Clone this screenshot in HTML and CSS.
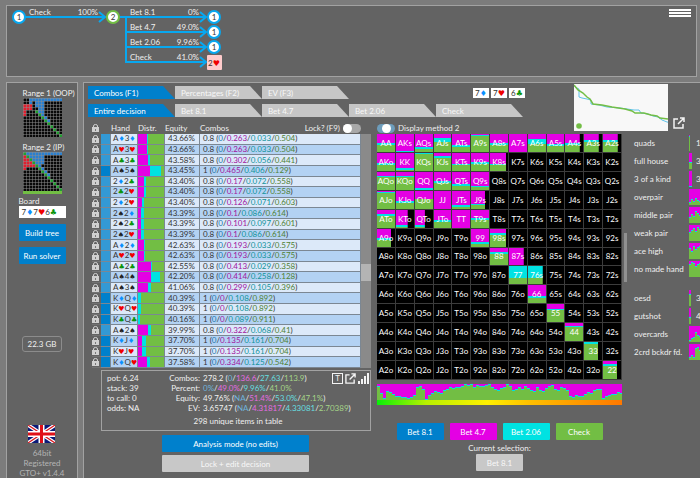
FILE: index.html
```html
<!DOCTYPE html>
<html lang="en">
<head>
<meta charset="utf-8">
<title>GTO+</title>
<link rel="stylesheet" href="styles.css">
</head>
<body>
<header class="panel tree">
  <svg class="tree-map" width="230" height="70" viewBox="0 0 230 70" role="img" aria-label="Decision tree">
    <g class="tree-lines">
      <path d="M12 11H97M113 11H199M119 11V56H199M119 26H199M119 41H199"/>
      <path d="M92 6l6 5-6 5M193 6l6 5-6 5M193 21l6 5-6 5M193 36l6 5-6 5M193 51l6 5-6 5"/>
    </g>
    <circle class="node" cx="12" cy="11" r="6"/>
    <circle class="node node-active" cx="106" cy="11" r="6"/>
    <circle class="node" cx="207" cy="11" r="6"/>
    <circle class="node" cx="207" cy="26" r="6"/>
    <circle class="node" cx="207" cy="41" r="6"/>
    <rect class="node-card" x="200" y="49" width="15" height="15" rx="1"/>
    <g class="node-text">
      <text x="12" y="14">1</text><text x="106" y="14">2</text>
      <text x="207" y="14">1</text><text x="207" y="29">1</text><text x="207" y="44">1</text>
      <text x="207" y="60">2<tspan class="suit h">♥</tspan></text>
    </g>
    <g class="edge-text">
      <text x="22" y="9">Check</text><text x="123" y="9">Bet 8.1</text><text x="123" y="24">Bet 4.7</text><text x="123" y="39">Bet 2.06</text><text x="123" y="54">Check</text>
    </g>
    <g class="edge-text edge-value">
      <text x="91" y="9">100%</text><text x="192" y="9">0%</text><text x="192" y="24">49.0%</text><text x="192" y="39">9.96%</text><text x="192" y="54">41.0%</text>
    </g>
  </svg>
  <button class="menu" aria-label="Menu"><i></i><i></i><i></i></button>
</header>

<div class="columns">
  <aside class="panel side">
    <div class="range"><span>Range 1 (OOP)</span><svg id="range1" width="39" height="39" viewBox="0 0 39 39"></svg></div>
    <div class="range range-current"><span>Range 2 (IP)</span><svg id="range2" width="39" height="39" viewBox="0 0 39 39"></svg></div>
    <div class="board">
      <span>Board</span>
      <div class="board-cards">7<b class="suit d">♦</b>7<b class="suit h">♥</b>6<b class="suit c">♣</b></div>
      <button class="btn">Build tree</button>
      <button class="btn">Run solver</button>
    </div>
    <div class="memory">22.3 GB</div>
    <footer class="about">
      <svg width="27" height="18" viewBox="0 0 27 18" role="img" aria-label="English">
        <path fill="#0b1a78" d="M0 0h27v18H0z"/>
        <path stroke="#fff" stroke-width="3.6" d="M0 0l27 18M27 0L0 18"/>
        <path stroke="#d8141c" stroke-width="1.2" d="M0 0l27 18M27 0L0 18"/>
        <path stroke="#fff" stroke-width="6" d="M13.500 0v18M0 9h27"/>
        <path stroke="#e01018" stroke-width="3" d="M13.500 0v18M0 9h27"/>
      </svg>
      <span>64bit</span><span>Registered</span><span>GTO+ v1.4.4</span>
    </footer>
  </aside>

  <main class="panel main">
    <div class="top">
      <div class="tabs-area">
        <div class="tab-line">
          <nav class="tabs"><button class="tab active">Combos (F1)</button><button class="tab">Percentages (F2)</button><button class="tab">EV (F3)</button></nav>
          <div class="cards"><span>7<b class="suit d">♦</b></span><span>7<b class="suit h">♥</b></span><span>6<b class="suit c">♣</b></span></div>
        </div>
        <nav class="tabs"><button class="tab active">Entire decision</button><button class="tab">Bet 8.1</button><button class="tab">Bet 4.7</button><button class="tab">Bet 2.06</button><button class="tab">Check</button></nav>
      </div>
      <svg class="equity-graph" width="94" height="47" viewBox="0 0 94 47" role="img" aria-label="Equity graph">
        <path fill="none" stroke="#5fc3ea" d="M0 2l3 2 2 1v8l3 1 5 1 4 1v4l8 1 8 2 13 1 14 2h5l2 3 7 1 5 2 5 1 4 3 5 2 4 1"/>
        <path fill="none" stroke="#73be46" stroke-width="1.500" d="M0 1l4 5 5 3 4 4 3 2 3 5 9 1 10 2 13 2 7 2 3 2h9l7 2 6 1 3 2 8 1"/>
        <circle cx="5" cy="42" r="2.800" fill="#73be46"/>
      </svg>
      <button class="icon-btn popout" aria-label="Open graph"><svg width="12" height="12" viewBox="0 0 12 12"><path d="M5 2H1v9h9V7M7 1h4v4M11 1L5 7"/></svg></button>
    </div>

    <div class="work">
      <section class="left">
        <div class="table-wrap">
          <table class="combos">
            <colgroup><col class="w-lock"><col class="w-strip"><col class="w-hand"><col class="w-dist"><col class="w-eq"><col></colgroup>
            <thead><tr>
              <th><svg class="lock" width="7" height="8" viewBox="0 0 7 8"><path d="M0 3h7v5H0z"/><path class="shackle" d="M1.500 3V2a2 1.500 0 0 1 4 0v1"/><path class="keyhole" d="M3 5h1v2H3z"/></svg></th><th></th><th>Hand</th><th>Distr.</th><th>Equity</th>
              <th><div class="combo-head"><span>Combos</span><label class="switch">Lock? (F9)<input type="checkbox" role="switch"></label></div></th>
            </tr></thead>
            <tbody id="rows"></tbody>
          </table>
          <div class="scroll"><i></i></div>
        </div>
        <div class="summary">
          <dl class="pot"><dd>pot: 6.24</dd><dd>stack: 39</dd><dd>to call: 0</dd><dd>odds: NA</dd></dl>
          <dl class="totals">
            <dt>Combos:</dt><dd>278.2 (<i class="b">0</i>/<i class="m">136.6</i>/<i class="t">27.63</i>/<i class="g">113.9</i>)</dd>
            <dt>Percent:</dt><dd><i class="b">0%</i>/<i class="m">49.0%</i>/<i class="t">9.96%</i>/<i class="g">41.0%</i></dd>
            <dt>Equity:</dt><dd>49.76% (<i class="b">NA</i>/<i class="m">51.4%</i>/<i class="t">53.0%</i>/<i class="g">47.1%</i>)</dd>
            <dt>EV:</dt><dd>3.65747 (<i class="b">NA</i>/<i class="m">4.31817</i>/<i class="t">4.33081</i>/<i class="g">2.70389</i>)</dd>
          </dl>
          <div class="tools">
            <button class="icon-btn boxed" aria-label="Text">T</button>
            <button class="icon-btn" aria-label="Open table"><svg width="11" height="11" viewBox="0 0 12 12"><path d="M5 2H1v9h9V7M7 1h4v4M11 1L5 7"/></svg></button>
            <button class="icon-btn" aria-label="Chart"><svg width="11" height="11" viewBox="0 0 11 11"><path class="solid" d="M0 8h2v3H0zM3 6h2v5H3zM6 3h2v8H6zM9 0h2v11H9z"/></svg></button>
          </div>
          <p>298 unique items in table</p>
        </div>
        <div class="modes"><button class="btn">Analysis mode (no edits)</button><button class="btn off">Lock + edit decision</button></div>
      </section>

      <section class="right">
        <label class="switch display"><input type="checkbox" role="switch" checked>Display method 2</label>
        <div class="matrix-line">
          <div class="matrix" id="matrix"></div>
          <div class="mini-scroll"><i></i></div>
          <ul class="groups" id="groups"></ul>
        </div>
        <div class="under">
          <svg id="histogram" width="100%" height="16" viewBox="0 0 245 16" preserveAspectRatio="none"></svg>
          <div class="heat"></div>
          <div class="actions"><button class="btn">Bet 8.1</button><button class="btn mag">Bet 4.7</button><button class="btn cy">Bet 2.06</button><button class="btn gr">Check</button></div>
          <span>Current selection:</span>
          <button class="btn off">Bet 8.1</button>
        </div>
      </section>
    </div>
  </main>
</div>
<script src="app.js"></script>
</body>
</html>
```
FILE: styles.css
```css
:root {
  --blue: #0080cc;
  --magenta: #e400e4;
  --cyan: #00e2e2;
  --green: #72be44;
  --grey: #636363;
}
* { box-sizing: border-box; }
body {
  margin: 0;
  min-height: 100vh;
  padding: 5px 0 0 6px;
  display: flex;
  flex-direction: column;
  gap: 5px;
  overflow: hidden;
  background: #7c7c7c;
  color: #f0f0f0;
  font: 8px/10px Lato, "Liberation Sans", sans-serif;
}
button { font: inherit; color: inherit; border: 0; padding: 0; background: none; }
i { font-style: normal; }
dl, dd, p, ul { margin: 0; padding: 0; list-style: none; }
.panel { background: var(--grey); border: 1px solid #a2a2a2; }
.suit { font-family: "DejaVu Sans", sans-serif; font-weight: 400; line-height: 0; }
.d { color: #0a90ff; fill: #0a90ff; }
.h { color: #f00000; fill: #f00000; }
.c { color: #0a950a; fill: #0a950a; }
.s { color: #222; }

/* decision tree */
.tree { display: flex; justify-content: space-between; align-items: flex-start; margin-right: 3px; }
.tree-lines { fill: none; stroke: #08a8f0; stroke-width: 2; }
.node { fill: #fff; stroke: #08a8f0; stroke-width: 2; }
.node-active { stroke: #72be44; }
.node-card { fill: #ffcccc; }
.node-text { text-anchor: middle; fill: #333; }
.edge-text { fill: #f0f0f0; }
.edge-value { text-anchor: end; }
.menu { display: grid; gap: 1px; width: 22px; margin: 3px 5px; }
.menu i { height: 2px; background: #fff; }

.columns { flex: 1; display: flex; gap: 5px; }

/* left side */
.side { flex: 0 0 72px; border-bottom: 0; display: flex; flex-direction: column; align-items: center; padding: 5px 0 0; }
.range { width: 39px; white-space: nowrap; display: grid; margin-bottom: 5px; }
.range-current { border-bottom: 3px solid var(--green); margin-bottom: 2px; }
.board { width: 47px; display: grid; }
.board-cards { background: #fff; color: #333; height: 12px; line-height: 12px; padding-left: 3px; margin-bottom: 6px; }
.btn { background: var(--blue); color: #fff; height: 17px; border-radius: 1px; }
.board .btn { margin-bottom: 6px; }
.off { background: #c8c8c8; color: #f8f8f8; }
.memory { margin-top: 66px; border: 1px solid #8c8c8c; border-radius: 3px; padding: 2px 5px; white-space: nowrap; }
.about { margin-top: auto; display: grid; justify-items: center; color: #b4b4b4; }
.about svg { margin-bottom: 5px; }

/* main */
.main { flex: 1; min-width: 0; padding: 1px 0 0 4px; border-right: 0; border-bottom: 0; }
.top { display: flex; height: 38px; }
.tabs-area { flex: 0 0 486px; padding-top: 2px; display: grid; gap: 5px; align-content: start; }
.tab-line { display: flex; justify-content: space-between; align-items: center; }
.tabs { display: flex; }
.tab {
  width: 87px; height: 13px; padding-left: 6px; text-align: left;
  background: #c6c6c6; color: #f8f8f8;
  clip-path: polygon(0 0, calc(100% - 12px) 0, 100% 100%, 0 100%);
}
.tab.active { background: var(--blue); color: #fff; }
.cards { display: flex; gap: 2px; margin-right: 49px; color: #333; }
.cards span { background: #fff; width: 16px; text-align: center; }
.equity-graph { background: #f8f8f8; }
.icon-btn svg, .popout svg { display: block; fill: none; stroke: #f4f4f4; stroke-width: 1.5; }
.icon-btn .solid { fill: #f4f4f4; stroke: none; }
.popout { align-self: flex-end; margin: 0 0 -7px 5px; }

.work { display: flex; gap: 6px; }
.left { flex: 0 0 283px; padding-left: 4px; }
.table-wrap { display: flex; }
.combos { width: 269px; height: 246px; border-collapse: separate; border-spacing: 0; table-layout: fixed; color: #333; }
.w-lock { width: 9px; }
.w-strip { width: 10px; }
.w-hand, .w-dist { width: 27px; }
.w-eq { width: 35px; }
.combos th { height: 12px; padding: 0; font-weight: 400; text-align: left; color: #f0f0f0; }
.combos td { padding: 0 0 0 2px; line-height: 9px; border-bottom: 1px solid #7b8793; background: #dce9f9; white-space: nowrap; }
.combos tr:nth-child(even) td { background: #b3d2f3; }
.combos td + td { border-right: 1px solid #7b8793; }
.combos td:nth-child(n + 5) { padding-left: 3px; }
.combos tbody tr .lock-cell.lock-cell { background: none; padding: 0; border-color: #737373; }
.combos tbody tr .strip.strip { background: #3399d5; }
.combos tbody tr .strip.full { background: var(--blue); }
.combos .suit { font-size: 7px; }
.lock { display: block; fill: #d0d0d0; }
.shackle { fill: none; stroke: #d0d0d0; }
.keyhole { fill: #777; }
.combo-head { display: flex; justify-content: space-between; }
.combos .b { color: #1b78ae; }
.combos .m { color: #a1149f; }
.combos .t { color: #11929a; }
.combos .g { color: #4f8133; }
.scroll { width: 10px; margin-top: 12px; background: #8a8a8a; padding-top: 130px; }
.scroll i { display: block; height: 17px; background: #b4b4b4; }

.switch { display: flex; align-items: center; gap: 3px; }
.switch input { appearance: none; margin: 0; width: 18px; height: 9px; border-radius: 5px; background: #a8a8a8; display: flex; align-items: center; }
.switch input::before { content: ""; width: 9px; height: 9px; border-radius: 50%; background: #fff; }
.switch input:checked { background: #6d9dbc; justify-content: center; }

.summary { margin: 2px 0 0 9px; border: 1px solid #a2a2a2; padding: 2px 1px 2px 5px; display: grid; grid-template-columns: 50px 1fr auto; height: 61px; }
.totals { display: grid; grid-template-columns: 43px 1fr; column-gap: 3px; white-space: nowrap; align-content: start; }
.totals dt { text-align: right; }
.totals dd { width: 0; }
.totals .b { color: #6fb3dc; }
.totals .m { color: #e46be2; }
.totals .t { color: #67dfe0; }
.totals .g { color: #a5d588; }
.tools { display: flex; gap: 2px; align-items: flex-start; }
.boxed { border: 1px solid #f4f4f4; width: 11px; height: 11px; line-height: 9px; }
.summary p { grid-column: 1 / -1; text-align: center; }
.modes { display: grid; gap: 3px; width: 147px; margin: 4px 0 0 70px; }

.right { flex: 1; min-width: 0; }
.display { height: 12px; }
.matrix-line { display: flex; width: 340px; }
.matrix { flex: 0 0 245px; height: 246px; display: grid; grid-template: repeat(13, 1fr) / repeat(13, 1fr); background: #000; }
.cell { display: grid; place-items: center; border: solid #3c3c3c; border-width: 0 1px 1px 0; color: #fff; background-repeat: no-repeat; min-width: 0; white-space: nowrap; }
.mini-scroll { width: 5px; padding: 99px 0 0 2px; }
.mini-scroll i { display: block; height: 49px; background: #909090; }
.groups { padding-left: 7px; }
.groups li { display: grid; grid-template-columns: 55px 4px 20px; height: 18px; align-items: center; white-space: nowrap; }
.groups li.wide { grid-template-columns: 55px 24px; }
.groups li.gap { margin-top: 11px; }
.groups svg { display: block; }
.groups span:last-child { padding-left: 3px; }
.under { width: 245px; margin-top: 4px; display: flex; flex-direction: column; align-items: center; }
.heat { width: 100%; height: 5px; background: linear-gradient(90deg, #08f008, #b8f000 20%, #fff000 45%, #ffc000 62%, #ff7800); }
.actions { display: flex; gap: 6px; margin: 18px 0 3px; }
.under .btn { width: 47px; }
.under .mag { background: var(--magenta); }
.under .cy { background: var(--cyan); }
.under .gr { background: var(--green); }
.under > span { line-height: 11px; }
```
FILE: app.js
```js
const M = '#e400e4', C = '#00e2e2', G = '#72be44';
const SUIT = { d: '♦', h: '♥', c: '♣', s: '♠' };
const LOCK = document.querySelector('.lock').outerHTML;

// hand, equity, combos, then the share of each action
const rows = `Ad3d 43.66 0.8 0 0.263 0.033 0.504
Ah3h 43.66 0.8 0 0.263 0.033 0.504
Ac3c 43.58 0.8 0 0.302 0.056 0.441
As5s 43.45 1 0 0.465 0.406 0.129
2d2c 43.40 0.8 0 0.17 0.072 0.558
2c2h 43.40 0.8 0 0.17 0.072 0.558
2d2h 43.40 0.8 0 0.126 0.071 0.603
2s2d 43.39 0.8 0 0.1 0.086 0.614
2s2c 43.39 0.8 0 0.101 0.097 0.601
2s2h 43.39 0.8 0 0.1 0.086 0.614
Ad2d 42.63 0.8 0 0.193 0.033 0.575
Ah2h 42.63 0.8 0 0.193 0.033 0.575
Ac2c 42.55 0.8 0 0.413 0.029 0.358
As4s 42.20 0.8 0 0.414 0.258 0.128
As3s 41.06 0.8 0 0.299 0.105 0.396
KdQd 40.39 1 0 0 0.108 0.892
KhQh 40.39 1 0 0 0.108 0.892
KcQc 40.16 1 0 0 0.089 0.911
As2s 39.99 0.8 0 0.322 0.068 0.41
KdJd 37.70 1 0 0.135 0.161 0.704
KhJh 37.70 1 0 0.135 0.161 0.704
KdQh 37.58 1 0 0.334 0.125 0.542`.split('\n').map(r => r.split(' '));

document.getElementById('rows').innerHTML = rows.map(([hand, eq, n, b, m, t, g]) => {
  const name = hand.replace(/[dhcs]/g, s => `<b class="suit ${s}">${SUIT[s]}</b>`);
  const x = m / n * 100, y = x + t / n * 100;
  return `<tr><td class="lock-cell">${LOCK}</td><td class="strip${n === '1' ? ' full' : ''}"></td><td>${name}</td>` +
    `<td class="distr" style="background-color:${G};background-image:linear-gradient(90deg,${M} ${x}%,${C} ${x}% ${y}%,${G} ${y}%)"></td>` +
    `<td>${eq}%</td><td>${n} (<i class="b">${b}</i>/<i class="m">${m}</i>/<i class="t">${t}</i>/<i class="g">${g}</i>)</td></tr>`;
}).join('');

// percent raised, percent small bet, percent of the hand in range
const fills = {
  AA: [50, 10], AKs: [96, 4], AQs: [70, 12], AJs: [22, 20], ATs: [60, 12], A9s: [8, 5], A8s: [50, 9], A7s: [100, 0], A6s: [30, 28], A5s: [55, 10],
  A4s: [52, 10, 82], A3s: [35, 12, 82], A2s: [35, 12, 82], AKo: [55, 10], KK: [82, 12], KQs: [2, 6], KJs: [14, 12], KTs: [60, 9], K9s: [52, 7], K8s: [60, 5, 90],
  AQo: [22, 8], KQo: [24, 5], QQ: [90, 8], QJs: [50, 10], QTs: [68, 8], Q9s: [76, 10], AJo: [5, 8], KJo: [56, 8], QJo: [42, 5], JJ: [100, 0], JTs: [75, 12],
  J9s: [70, 10, 80], ATo: [20, 14], KTo: [85, 10, 65], QTo: [82, 12, 55], JTo: [55, 10], TT: [100, 0], T9s: [45, 10], A9o: [50, 10, 80], 99: [72, 10],
  '98s': [20, 14, 90], 88: [25, 10], '87s': [100, 0, 82], 77: [0, 66], '76s': [0, 66, 82], 66: [60, 12], 55: [25, 10], 44: [15, 8], 33: [0, 10, 80], 22: [15, 10, 80]
};
const R = 'AKQJT98765432';
let cells = '';
for (let r = 0; r < 13; r++) for (let c = 0; c < 13; c++) {
  const h = r === c ? R[r] + R[c] : r < c ? R[r] + R[c] + 's' : R[c] + R[r] + 'o';
  const f = fills[h];
  const bg = f ? ` style="background-image:linear-gradient(${M} ${f[0]}%,${C} ${f[0]}% ${f[0] + f[1]}%,${G} ${f[0] + f[1]}%);background-size:${f[2] || 100}% 100%"` : '';
  cells += `<div class="cell"${bg}>${h}</div>`;
}
document.getElementById('matrix').innerHTML = cells;

function bars(list, step, h) {
  return `<path fill="${M}" d="M0 0h${list.length * step}v${h}H0z"/>` + list.map((v, i) =>
    `<path fill="${C}" d="M${i * step} ${h - v - 1}h${step}v${v + 1}h-${step}z"/><path fill="${G}" d="M${i * step} ${h - v}h${step}v${v}h-${step}z"/>`).join('');
}
const hist = [13, 6, 1, 8, 7, 5, 3, 3, 2, 2, 1, 2, 4, 12, 13, 10, 0, 4, 6, 8, 7, 6, 9, 10, 12, 11, 12, 12, 13, 15, 14, 15, 12, 14, 13, 13, 14, 15, 12, 10, 9, 11,
  12, 15, 13, 9, 10, 12, 10, 13, 11, 9, 8, 12, 9, 8, 11, 13, 14, 10, 9, 12, 11, 9, 3, 2, 4, 3, 3, 5, 7, 6, 9, 10, 10, 1, 3, 4, 5, 5, 7, 6];
document.getElementById('histogram').innerHTML = bars(hist, 3, 16);

const groups = [['quads', 1, '1'], ['full house', 3, '3'], ['3 of a kind', 3, '3'], ['overpair', 0, '', [2, 5, 3, 6, 4, 3]], ['middle pair', 0, '', [5, 8, 6, 11, 9, 7]],
  ['weak pair', 0, '', [8, 10, 12, 9, 13, 11]], ['ace high', 0, '', [10, 7, 12, 9, 11, 12]], ['no made hand', 0, '', [12, 14, 13, 10, 12, 13]],
  ['oesd', 2, '3'], ['gutshot', 2, '4'], ['overcards', 0, '', [1, 3, 4, 9, 6, 5]], ['2crd bckdr fd.', 0, '', [2, 4, 2, 11, 12, 9]]];
const small = { quads: [14], 'full house': [6], '3 of a kind': [0], oesd: [11], gutshot: [6] };
document.getElementById('groups').innerHTML = groups.map(([n, w, v, list]) =>
  `<li class="${list ? 'wide' : ''}${n === 'oesd' ? ' gap' : ''}"><span>${n}</span><svg width="${list ? 24 : w}" height="16" viewBox="0 0 ${list ? 24 : w} 16">` +
  (list ? bars(list.concat(list), 2, 16) : bars(small[n], w, 16)) + `</svg>${v ? `<span>${v}</span>` : ''}</li>`).join('');

// 13x13 range thumbnails: b suited, g pairs, r offsuit
function range(id, map) {
  const fill = { b: '#2a80d0', g: '#20a030', r: '#e02030' };
  let s = '<path fill="#8c8c8c" d="M0 0h39v39H0z"/>';
  for (let r = 0; r < 13; r++) for (let c = 0; c < 13; c++) {
    const key = (map[r] || '')[c] || (r === c ? 'g' : '.');
    s += `<rect x="${c * 3 + 0.5}" y="${r * 3 + 0.5}" width="2.500" height="2.500" fill="${fill[key] || '#080808'}"/>`;
  }
  document.getElementById(id).innerHTML = s;
}
range('range1', ['..bbbbbbbbbbb', '..b.bbb......', 'rrr.bbb......', 'rrr..bb......', 'r...gbb......', 'r....gb......', '......gb.....', '.......gb....']);
range('range2', ['gbbbbbbbbbbbb', 'rgbbbbb......', 'rrgbbbb......', 'rrrgbbb......', 'rrrrgb.......', 'r....gb......', '......gb.....', '.......gb....']);
```
